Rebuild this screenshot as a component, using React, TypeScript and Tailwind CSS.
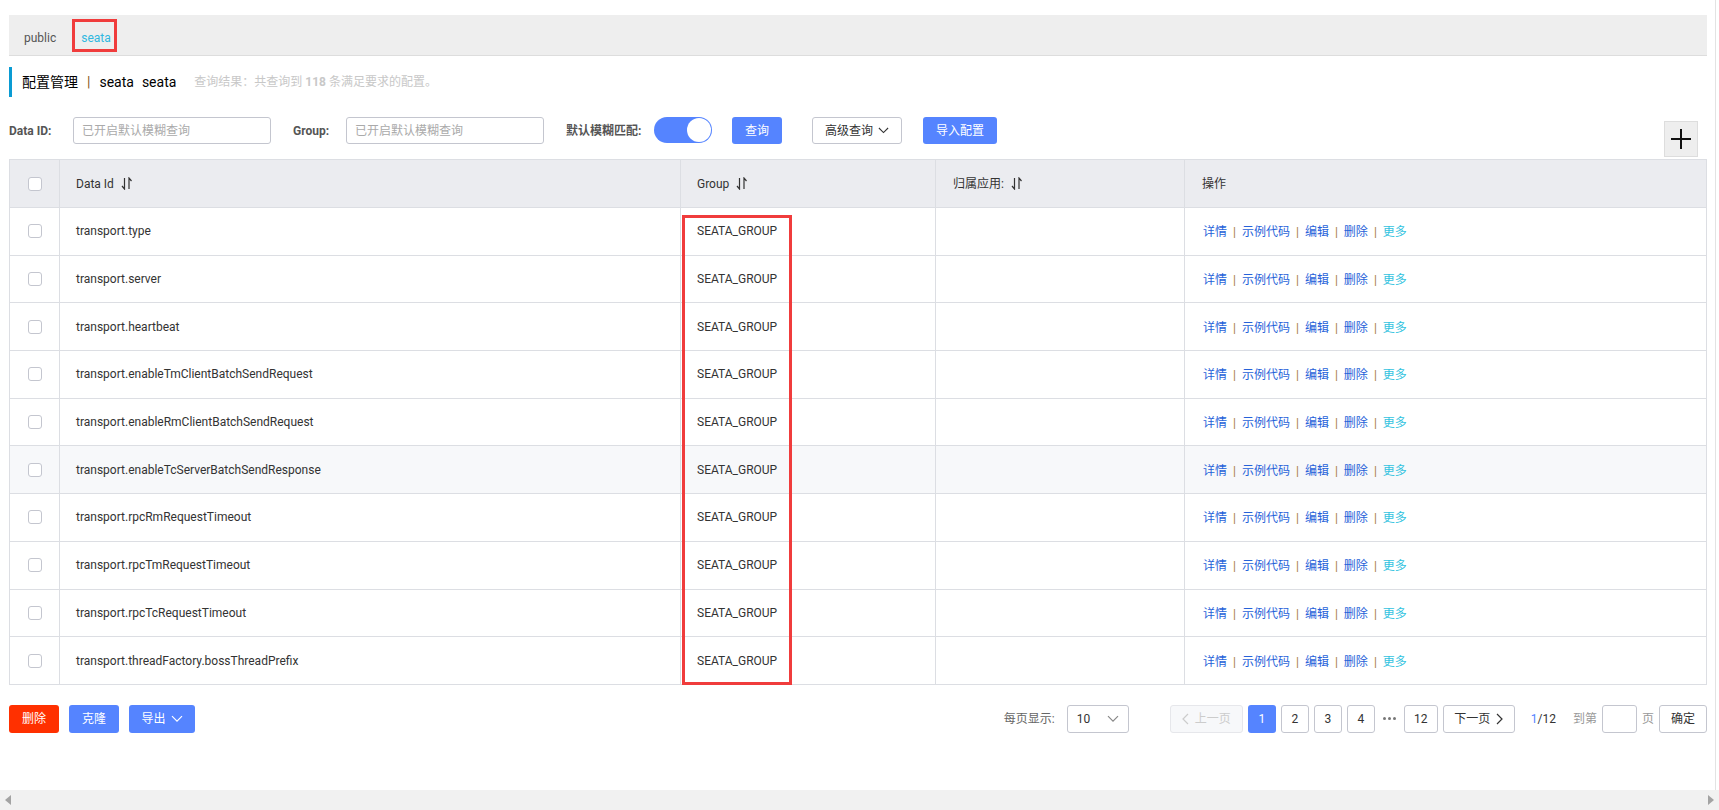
import React from "react";

const rows = [
  "transport.type",
  "transport.server",
  "transport.heartbeat",
  "transport.enableTmClientBatchSendRequest",
  "transport.enableRmClientBatchSendRequest",
  "transport.enableTcServerBatchSendResponse",
  "transport.rpcRmRequestTimeout",
  "transport.rpcTmRequestTimeout",
  "transport.rpcTcRequestTimeout",
  "transport.threadFactory.bossThreadPrefix",
];

function SortIcon() {
  return (
    <svg width="12" height="13" viewBox="0 0 12 13" className="ml-[7px] inline-block">
      <path d="M3.5 1 V12 L1 9" fill="none" stroke="#333" strokeWidth="1.2" />
      <path d="M8 12 V1 L10.5 4" fill="none" stroke="#333" strokeWidth="1.2" />
    </svg>
  );
}

function Chevron({ color = "#fff", size = 12 }: { color?: string; size?: number }) {
  return (
    <svg width={size} height={size * 0.6} viewBox="0 0 12 7" className="inline-block">
      <path d="M1 1 L6 6 L11 1" fill="none" stroke={color} strokeWidth="1.2" />
    </svg>
  );
}

function Checkbox() {
  return <div className="w-[14px] h-[14px] rounded-[3px] border border-[#c4c6cf] bg-white" />;
}

function Sep() {
  return <span className="mx-[6px] text-[#a87a45]">|</span>;
}

export default function App() {
  const cols = "grid grid-cols-[50px_621px_255px_249px_523px]";
  return (
    <div className="relative w-[1719px] h-[810px] bg-white overflow-hidden text-[12px] text-[#333] font-[Roboto,'Noto_Sans_CJK_SC',sans-serif]">
      <div className="flex h-[790px]">
        <div className="ml-[9px] w-[1698px] flex flex-col">
          {/* Tab bar */}
          <div className="mt-[15px] h-[41px] bg-[#eeeeee] border-b border-[#dddddd] flex items-center pt-[5px] pl-[15px] text-[12px]">
            <span className="text-[#555]">public</span>
            <span className="ml-[25px] text-[#30b8e0]">seata</span>
          </div>

          {/* Title */}
          <div className="mt-[11px] h-[30px] flex items-center border-l-[3px] border-[#0a9bd3] pl-[10px]">
            <span className="text-[14px] text-black">配置管理</span>
            <span className="text-[14px] mx-[9px] text-[#8a5a20]">|</span>
            <span className="text-[14px] text-black">seata</span>
            <span className="text-[14px] text-black ml-[8px]">seata</span>
            <span className="ml-[18px] text-[12px] text-[#c8c8c8]">
              查询结果：共查询到 <b className="font-bold">118</b> 条满足要求的配置。
            </span>
          </div>

          {/* Search row */}
          <div className="mt-[20px] flex items-start">
            <div className="h-[27px] flex items-center w-[64px] font-bold text-[#555]">Data ID:</div>
            <div className="h-[27px] w-[198px] border border-[#c4c6cf] rounded-[3px] flex items-center pl-[8px] text-[#aaaaaa]">
              已开启默认模糊查询
            </div>
            <div className="ml-[22px] h-[27px] flex items-center w-[53px] font-bold text-[#555]">Group:</div>
            <div className="h-[27px] w-[198px] border border-[#c4c6cf] rounded-[3px] flex items-center pl-[8px] text-[#aaaaaa]">
              已开启默认模糊查询
            </div>
            <div className="ml-[22px] h-[27px] flex items-center w-[88px] font-bold text-[#555]">默认模糊匹配:</div>
            <div className="h-[26px] w-[58px] rounded-full bg-[#5584ff] flex items-center justify-end pr-[1px]">
              <div className="w-[24px] h-[24px] rounded-full bg-white" />
            </div>
            <div className="ml-[20px] h-[27px] w-[50px] rounded-[3px] bg-[#5584ff] text-white flex items-center justify-center">查询</div>
            <div className="ml-[30px] h-[27px] w-[90px] rounded-[3px] border border-[#c4c6cf] text-[#333] flex items-center justify-center gap-[5px]">
              高级查询 <Chevron color="#333" size={11} />
            </div>
            <div className="ml-[21px] h-[27px] w-[74px] rounded-[3px] bg-[#5584ff] text-white flex items-center justify-center">导入配置</div>
            <div className="ml-auto mr-[9px] mt-[4px] w-[34px] h-[36px] bg-[#eeeeee] border border-[#dddddd] flex items-center justify-center">
              <svg width="22" height="22" viewBox="0 0 22 22">
                <path d="M11 1 V21 M1 11 H21" stroke="#111" strokeWidth="2" />
              </svg>
            </div>
          </div>

          {/* Table */}
          <div className="mt-[2px] border border-[#dcdee3] border-b-0">
            <div className={`${cols} h-[48px] bg-[#ebecf0] border-b border-[#dcdee3]`}>
              <div className="flex items-center justify-center border-r border-[#dcdee3]"><Checkbox /></div>
              <div className="flex items-center pl-[16px] border-r border-[#dcdee3]">Data Id<SortIcon /></div>
              <div className="flex items-center pl-[16px] border-r border-[#dcdee3]">Group<SortIcon /></div>
              <div className="flex items-center pl-[17px] border-r border-[#dcdee3]">归属应用:<SortIcon /></div>
              <div className="flex items-center pl-[17px]">操作</div>
            </div>
            {rows.map((r, i) => (
              <div key={r} className={`${cols} h-[47.7px] border-b border-[#dcdee3] ${i === 5 ? "bg-[#f7f8fa]" : "bg-white"}`}>
                <div className="flex items-center justify-center border-r border-[#dcdee3]"><Checkbox /></div>
                <div className="flex items-center pl-[16px] border-r border-[#dcdee3]">{r}</div>
                <div className="flex items-center pl-[16px] border-r border-[#dcdee3]">SEATA_GROUP</div>
                <div className="border-r border-[#dcdee3]" />
                <div className="flex items-center pl-[18px] pt-[2px] text-[#2662d9]">
                  <span>详情</span><Sep />
                  <span>示例代码</span><Sep />
                  <span>编辑</span><Sep />
                  <span>删除</span><Sep />
                  <span className="text-[#33c3e0]">更多</span>
                </div>
              </div>
            ))}
          </div>

          {/* Bottom row */}
          <div className="mt-[20px] flex items-center h-[28px]">
            <div className="h-[28px] w-[50px] rounded-[3px] bg-[#ff3000] text-white flex items-center justify-center">删除</div>
            <div className="ml-[10px] h-[28px] w-[50px] rounded-[3px] bg-[#5584ff] text-white flex items-center justify-center">克隆</div>
            <div className="ml-[10px] h-[28px] w-[66px] rounded-[3px] bg-[#5584ff] text-white flex items-center justify-center gap-[5px]">
              导出 <Chevron size={12} />
            </div>

            <div className="ml-auto flex items-center h-[28px]">
              <span className="text-[#666]">每页显示:</span>
              <div className="ml-[12px] h-[28px] w-[62px] border border-[#c4c6cf] rounded-[3px] flex items-center justify-between pl-[9px] pr-[9px]">
                <span>10</span>
                <Chevron color="#888" size={12} />
              </div>
              <div className="ml-[41px] h-[28px] w-[73px] border border-[#e6e7eb] bg-[#f7f8fa] rounded-[3px] flex items-center justify-center gap-[6px] text-[#cccccc]">
                <svg width="7" height="12" viewBox="0 0 7 12"><path d="M6 1 L1 6 L6 11" fill="none" stroke="#cccccc" strokeWidth="1.2" /></svg>
                上一页
              </div>
              <div className="ml-[5px] h-[28px] w-[28px] rounded-[3px] bg-[#5584ff] text-white flex items-center justify-center">1</div>
              <div className="ml-[5px] h-[28px] w-[28px] rounded-[3px] border border-[#c4c6cf] flex items-center justify-center">2</div>
              <div className="ml-[5px] h-[28px] w-[28px] rounded-[3px] border border-[#c4c6cf] flex items-center justify-center">3</div>
              <div className="ml-[5px] h-[28px] w-[28px] rounded-[3px] border border-[#c4c6cf] flex items-center justify-center">4</div>
              <div className="h-[28px] w-[29px] flex items-center justify-center gap-[2px]">
                <span className="w-[3px] h-[3px] rounded-full bg-[#777]" />
                <span className="w-[3px] h-[3px] rounded-full bg-[#777]" />
                <span className="w-[3px] h-[3px] rounded-full bg-[#777]" />
              </div>
              <div className="h-[28px] w-[34px] rounded-[3px] border border-[#c4c6cf] flex items-center justify-center">12</div>
              <div className="ml-[5px] h-[28px] w-[72px] rounded-[3px] border border-[#c4c6cf] flex items-center justify-center gap-[6px]">
                下一页
                <svg width="7" height="12" viewBox="0 0 7 12"><path d="M1 1 L6 6 L1 11" fill="none" stroke="#333" strokeWidth="1.2" /></svg>
              </div>
              <span className="ml-[16px]"><span className="text-[#5584ff]">1</span>/12</span>
              <span className="ml-[17px] text-[#999]">到第</span>
              <div className="ml-[5px] h-[28px] w-[35px] rounded-[3px] border border-[#c4c6cf]" />
              <span className="ml-[5px] text-[#999]">页</span>
              <div className="ml-[5px] h-[28px] w-[48px] rounded-[3px] border border-[#c4c6cf] flex items-center justify-center">确定</div>
            </div>
          </div>
        </div>
        <div className="w-[8px]" />
        <div className="w-[1px] bg-[#e3e3e3]" />
      </div>

      {/* Horizontal scrollbar */}
      <div className="h-[20px] bg-[#f1f1f1] flex items-center justify-between px-[5px]">
        <svg width="6" height="10" viewBox="0 0 6 10"><path d="M6 0 L0 5 L6 10 Z" fill="#a3a3a3" /></svg>
        <svg width="6" height="10" viewBox="0 0 6 10"><path d="M0 0 L6 5 L0 10 Z" fill="#a3a3a3" /></svg>
      </div>

      {/* Annotation boxes */}
      <div className="absolute left-[72px] top-[19px] w-[45px] h-[33px] border-[3px] border-[#f03c3c]" />
      <div className="absolute left-[682px] top-[215px] w-[110px] h-[470px] border-[3px] border-[#f03c3c]" />
    </div>
  );
}
